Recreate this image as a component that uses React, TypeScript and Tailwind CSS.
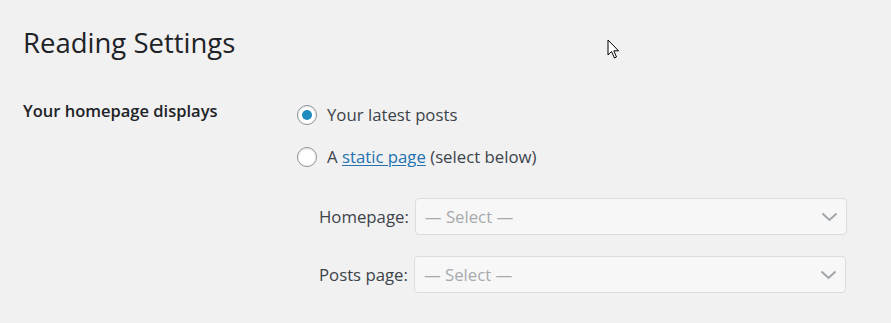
const font = { fontFamily: '"Open Sans", "Noto Sans", sans-serif' };

function Radio({ checked }: { checked?: boolean }) {
  return (
    <span className="flex h-[20px] w-[20px] shrink-0 items-center justify-center rounded-full border border-[#8c8f94] bg-white shadow-[inset_0_1px_2px_rgba(0,0,0,0.1)]">
      {checked && <span className="h-[10px] w-[10px] rounded-full bg-[#1e8cbe]" />}
    </span>
  );
}

function Chevron() {
  return (
    <svg width="17" height="10" viewBox="0 0 17 10" fill="none">
      <path d="M1.5 1.5 L8.5 8 L15.5 1.5" stroke="#a0a5aa" strokeWidth="2" />
    </svg>
  );
}

function SelectRow({ label }: { label: string }) {
  return (
    <div className="flex items-center gap-[6px]">
      <span className="text-[16.75px] text-[#3c434a]">{label}</span>
      <div className="flex h-[37px] w-[432px] items-center justify-between rounded-[4px] border border-[#dcdcde] bg-[#f7f7f7] pl-[9px] pr-[8px]">
        <span className="text-[16.75px] text-[#a7aaad]">— Select —</span>
        <Chevron />
      </div>
    </div>
  );
}

export default function App() {
  return (
    <div
      className="relative h-[323px] w-[891px] overflow-hidden bg-[#f1f1f1] pl-[23px] pt-[23px] text-[#1d2327]"
      style={font}
    >
      <h1 className="text-[27.5px] leading-[40px] font-normal text-[#1d2327]">Reading Settings</h1>

      <div className="mt-[36px] flex">
        <div className="w-[274px] shrink-0 text-[16.5px] font-semibold leading-[24px] text-[#1d2327]">
          Your homepage displays
        </div>
        <div className="flex flex-col pt-[4px]">
          <label className="flex items-center gap-[10px] text-[16.75px] leading-[24px] text-[#3c434a]">
            <Radio checked />
            Your latest posts
          </label>
          <label className="mt-[18px] flex items-center gap-[10px] text-[16.75px] leading-[24px] text-[#3c434a]">
            <Radio />
            <span>
              A{" "}
              <a className="text-[#2271b1] underline underline-offset-2">static page</a> (select
              below)
            </span>
          </label>
          <div className="mt-[29px] flex flex-col gap-[21px] pl-[22px]">
            <SelectRow label="Homepage:" />
            <SelectRow label="Posts page:" />
          </div>
        </div>
      </div>

      {/* mouse pointer */}
      <svg
        className="absolute left-[607px] top-[39px]"
        width="14"
        height="21"
        viewBox="0 0 14 21"
      >
        <path
          d="M1 1 L1 16 L4.5 12.5 L7.5 19 L9.5 18 L6.8 11.8 L11.5 11.8 Z"
          fill="#fff"
          stroke="#000"
          strokeWidth="1"
        />
      </svg>
    </div>
  );
}
